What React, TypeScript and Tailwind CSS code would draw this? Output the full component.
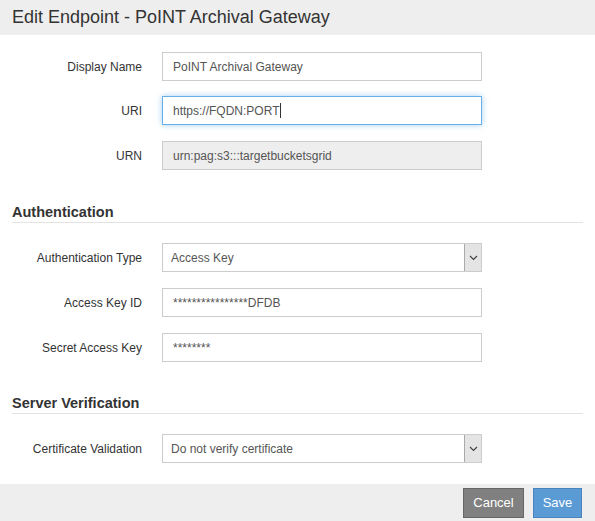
import { ReactNode } from "react";

const font = { fontFamily: '"Liberation Sans", Arial, sans-serif' };

const Row = ({ label, children, className = "" }: { label: string; children: ReactNode; className?: string }) => (
  <div className={`flex items-center ${className}`}>
    <label className="w-[130px] text-right text-[12px] text-[#333]">{label}</label>
    <div className="ml-[20px] w-[320px]">{children}</div>
  </div>
);

const TextBox = ({ value, disabled, focused }: { value: string; disabled?: boolean; focused?: boolean }) => (
  <div
    className={`flex h-[29px] items-center border px-[10px] text-[12px] text-[#555] ${
      disabled
        ? "border-[#ccc] bg-[#eeeeee]"
        : focused
        ? "border-[#66afe9] bg-white shadow-[0_0_6px_rgba(102,175,233,0.6)]"
        : "border-[#ccc] bg-white"
    }`}
  >
    <span>{value}</span>
    {focused && <span className="ml-px inline-block h-[15px] w-px bg-[#333]" />}
  </div>
);

const SelectBox = ({ value }: { value: string }) => (
  <div className="flex h-[29px] items-center border border-[#ccc] bg-white text-[12px] text-[#555]">
    <span className="flex-1 pl-[8px]">{value}</span>
    <div className="flex h-full w-[17px] items-center justify-center border-l border-[#aaa] bg-[#e4e4e4]">
      <svg width="9" height="6" viewBox="0 0 9 6" fill="none">
        <path d="M1 1l3.5 3.5L8 1" stroke="#444" strokeWidth="1.2" />
      </svg>
    </div>
  </div>
);

const Section = ({ title }: { title: string }) => (
  <div className="border-b border-[#e3e3e3] text-[14.5px] leading-[20px] font-bold text-[#333]">{title}</div>
);

export default function App() {
  return (
    <div className="h-[521px] w-[595px] overflow-hidden bg-white" style={font}>
      <div className="flex h-[35px] items-center bg-[#eeeeee] px-[12px] text-[18px] text-[#333]">
        Edit Endpoint - PoINT Archival Gateway
      </div>

      <div className="px-[12px] pt-[17px]">
        <Row label="Display Name">
          <TextBox value="PoINT Archival Gateway" />
        </Row>
        <Row label="URI" className="mt-[15px]">
          <TextBox value="https://FQDN:PORT" focused />
        </Row>
        <Row label="URN" className="mt-[16px]">
          <TextBox value="urn:pag:s3:::targetbucketsgrid" disabled />
        </Row>

        <div className="mt-[32px] w-[571px]">
          <Section title="Authentication" />
        </div>
        <Row label="Authentication Type" className="mt-[20px]">
          <SelectBox value="Access Key" />
        </Row>
        <Row label="Access Key ID" className="mt-[16px]">
          <TextBox value="****************DFDB" />
        </Row>
        <Row label="Secret Access Key" className="mt-[16px]">
          <TextBox value="********" />
        </Row>

        <div className="mt-[31px] w-[571px]">
          <Section title="Server Verification" />
        </div>
        <Row label="Certificate Validation" className="mt-[20px]">
          <SelectBox value="Do not verify certificate" />
        </Row>
      </div>

      <div className="mt-[21px] flex h-[38px] items-center justify-end gap-[9px] bg-[#eeeeee] pr-[13px]">
        <button className="h-[30px] w-[61px] border border-[#666] bg-[#808080] text-[13px] text-white">Cancel</button>
        <button className="h-[30px] w-[49px] border border-[#4a84bd] bg-[#5b9bd5] text-[13px] text-white">Save</button>
      </div>
    </div>
  );
}
